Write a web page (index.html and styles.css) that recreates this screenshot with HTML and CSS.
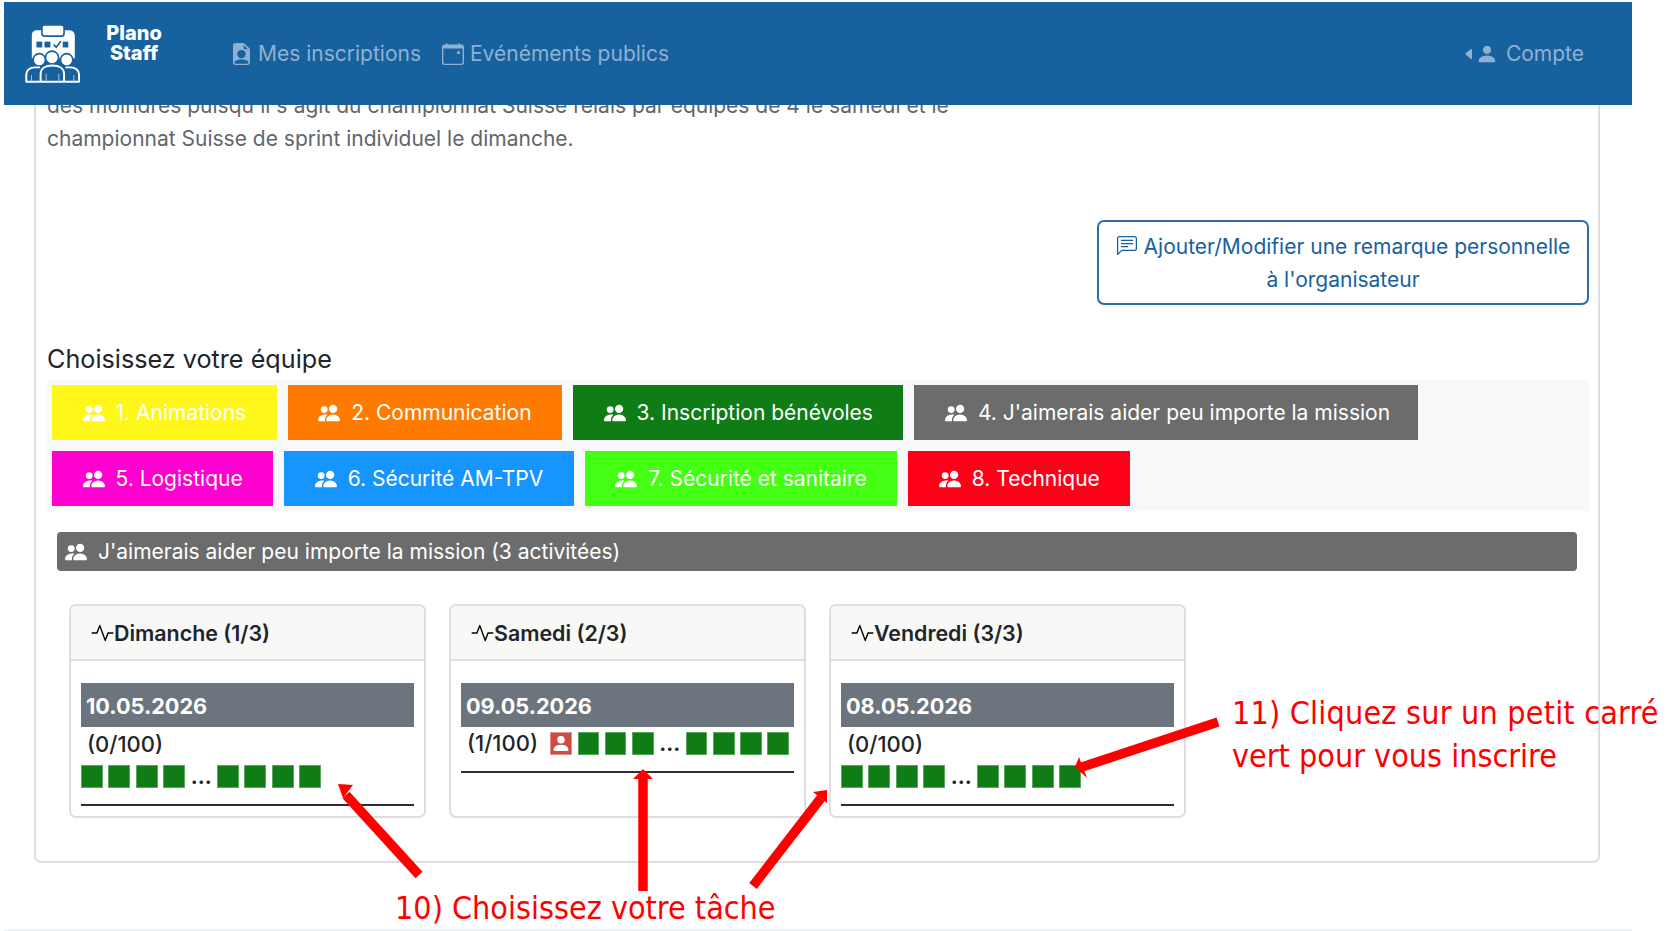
FILE: index.html
```html
<!DOCTYPE html>
<html lang="fr">
<head>
  <meta charset="UTF-8" />
  <title>Plano Staff</title>
  <link rel="stylesheet" href="styles.css">
</head>
<body>

  <!-- Shared icons -->
  <svg class="icon-defs" xmlns="http://www.w3.org/2000/svg">
    <symbol id="i-people" viewBox="0 0 16 16">
      <path d="M7 14s-1 0-1-1 1-4 5-4 5 3 5 4-1 1-1 1H7zm4-6a3 3 0 1 0 0-6 3 3 0 0 0 0 6z"/>
      <path d="M5.216 14A2.238 2.238 0 0 1 5 13c0-1.355.68-2.75 1.936-3.72A6.325 6.325 0 0 0 5 9c-4 0-5 3-5 4s1 1 1 1h4.216z"/>
      <path d="M4.5 8a2.5 2.5 0 1 0 0-5 2.5 2.5 0 0 0 0 5z"/>
    </symbol>
    <symbol id="i-person" viewBox="0 0 16 16">
      <path d="M3 14s-1 0-1-1 1-4 6-4 6 3 6 4-1 1-1 1H3zm5-6a3 3 0 1 0 0-6 3 3 0 0 0 0 6z"/>
    </symbol>
    <symbol id="i-activity" viewBox="0 0 16 16">
      <path d="M6 2a.5.5 0 0 1 .47.33L10 12.036l1.53-4.208A.5.5 0 0 1 12 7.5h3.5a.5.5 0 0 1 0 1h-3.15l-1.88 5.17a.5.5 0 0 1-.94 0L6 3.964 4.47 8.171A.5.5 0 0 1 4 8.5H.5a.5.5 0 0 1 0-1h3.15l1.88-5.17A.5.5 0 0 1 6 2Z"/>
    </symbol>
  </svg>

  <div class="page">

    <!-- Navbar -->
    <nav class="navbar">
      <svg class="logo" viewBox="40 38 175 182" xmlns="http://www.w3.org/2000/svg">
        <path class="logo-board" d="M76 56h104a16 16 0 0 1 16 16v70h-132v-70a16 16 0 0 1 12-16z"/>
        <rect class="logo-clip" x="95" y="40" width="68" height="34" rx="8"/>
        <rect class="logo-box" x="78" y="91" width="18" height="18"/>
        <rect class="logo-box" x="103" y="91" width="18" height="18"/>
        <rect class="logo-box" x="159" y="91" width="17" height="18"/>
        <path class="logo-check" d="M131 100l8 8 14-18"/>
        <circle class="logo-head" cx="87" cy="147" r="19"/>
        <circle class="logo-head" cx="171" cy="147" r="19"/>
        <circle class="logo-head" cx="126" cy="140" r="20"/>
        <path class="logo-body" d="M47 214v-22c0-14 12-22 26-22h16"/>
        <path class="logo-body" d="M209 214v-22c0-14-12-22-26-22h-16"/>
        <path class="logo-body" d="M91 214v-24c0-16 14-26 36-26s36 10 36 26v24"/>
        <path class="logo-body" d="M45 214h166"/>
        <path class="logo-line" d="M63 194v20M108 190v24M147 190v24M193 194v20"/>
      </svg>
      <div class="brand">Plano<br>Staff</div>
      <a class="nav-link" href="#">
        <svg class="nav-icon" viewBox="2 0 12 16" preserveAspectRatio="none"><path d="M9.293 0H4a2 2 0 0 0-2 2v12a2 2 0 0 0 2 2h8a2 2 0 0 0 2-2V4.707A1 1 0 0 0 13.707 4L10 .293A1 1 0 0 0 9.293 0zM9.5 3.5v-2l3 3h-2a1 1 0 0 1-1-1zM11 8a3 3 0 1 1-6 0 3 3 0 0 1 6 0zm2 5.755V14a1 1 0 0 1-1 1H4a1 1 0 0 1-1-1v-.245S4 12 8 12s5 1.755 5 1.755z"/></svg>
        Mes inscriptions
      </a>
      <a class="nav-link" href="#">
        <svg class="nav-icon cal" viewBox="0 0 16 16" preserveAspectRatio="none"><path d="M3.5 0a.5.5 0 0 1 .5.5V1h8V.5a.5.5 0 0 1 1 0V1h1a2 2 0 0 1 2 2v11a2 2 0 0 1-2 2H2a2 2 0 0 1-2-2V3a2 2 0 0 1 2-2h1V.5a.5.5 0 0 1 .5-.5zM1 4v10a1 1 0 0 0 1 1h12a1 1 0 0 0 1-1V4H1z"/><path d="M11 6h2v2h-2z"/></svg>
        Evénéments publics
      </a>
      <a class="nav-link account" href="#">
        <svg class="caret" viewBox="3 2 8 12"><path d="m3.86 8.753 5.482 4.796c.646.566 1.658.106 1.658-.753V3.204a1 1 0 0 0-1.659-.753l-5.48 4.796a1 1 0 0 0 0 1.506z"/></svg>
        <svg class="nav-person"><use href="#i-person"/></svg>
        Compte
      </a>
    </nav>

    <!-- Main card -->
    <div class="main-card">
      <p class="intro">des moindres puisqu'il s'agit du championnat Suisse relais par équipes de 4 le samedi et le championnat Suisse de sprint individuel le dimanche.</p>

      <div class="remark-row">
        <a class="remark-btn" href="#">
          <svg class="remark-icon" viewBox="0 0 16 16"><path d="M14 1a1 1 0 0 1 1 1v8a1 1 0 0 1-1 1H4.414A2 2 0 0 0 3 11.586l-2 2V2a1 1 0 0 1 1-1h12zM2 0a2 2 0 0 0-2 2v12.793a.5.5 0 0 0 .854.353l2.853-2.853A1 1 0 0 1 4.414 12H14a2 2 0 0 0 2-2V2a2 2 0 0 0-2-2H2z"/><path d="M3 3.5a.5.5 0 0 1 .5-.5h9a.5.5 0 0 1 0 1h-9a.5.5 0 0 1-.5-.5zM3 6a.5.5 0 0 1 .5-.5h9a.5.5 0 0 1 0 1h-9A.5.5 0 0 1 3 6zm0 2.5a.5.5 0 0 1 .5-.5h5a.5.5 0 0 1 0 1h-5a.5.5 0 0 1-.5-.5z"/></svg>
          Ajouter/Modifier une remarque personnelle<br>à l'organisateur
        </a>
      </div>

      <h2 class="section-title">Choisissez votre équipe</h2>

      <div class="teams">
        <div class="team-row">
          <a class="team yellow" href="#"><svg class="people"><use href="#i-people"/></svg>1. Animations</a>
          <a class="team orange" href="#"><svg class="people"><use href="#i-people"/></svg>2. Communication</a>
          <a class="team green" href="#"><svg class="people"><use href="#i-people"/></svg>3. Inscription bénévoles</a>
          <a class="team gray" href="#"><svg class="people"><use href="#i-people"/></svg>4. J'aimerais aider peu importe la mission</a>
        </div>
        <div class="team-row">
          <a class="team magenta" href="#"><svg class="people"><use href="#i-people"/></svg>5. Logistique</a>
          <a class="team blue" href="#"><svg class="people"><use href="#i-people"/></svg>6. Sécurité AM-TPV</a>
          <a class="team lime" href="#"><svg class="people"><use href="#i-people"/></svg>7. Sécurité et sanitaire</a>
          <a class="team red" href="#"><svg class="people"><use href="#i-people"/></svg>8. Technique</a>
        </div>
      </div>

      <div class="team-bar"><svg class="people"><use href="#i-people"/></svg>J'aimerais aider peu importe la mission (3 activitées)</div>

      <div class="activities">
        <div class="activity">
          <div class="activity-head"><svg class="pulse"><use href="#i-activity"/></svg>Dimanche (1/3)</div>
          <div class="activity-body">
            <div class="date-bar">10.05.2026</div>
            <div class="count">(0/100)</div>
            <div class="slots">
              <span class="slot"></span><span class="slot"></span><span class="slot"></span><span class="slot"></span>
              <span class="dots">...</span>
              <span class="slot"></span><span class="slot"></span><span class="slot"></span><span class="slot"></span>
            </div>
            <div class="rule"></div>
          </div>
        </div>

        <div class="activity">
          <div class="activity-head"><svg class="pulse"><use href="#i-activity"/></svg>Samedi (2/3)</div>
          <div class="activity-body">
            <div class="date-bar">09.05.2026</div>
            <div class="slots inline">
              <span class="count">(1/100)</span>
              <span class="slot taken"><svg><use href="#i-person"/></svg></span>
              <span class="slot"></span><span class="slot"></span><span class="slot"></span>
              <span class="dots">...</span>
              <span class="slot"></span><span class="slot"></span><span class="slot"></span><span class="slot"></span>
            </div>
            <div class="rule"></div>
          </div>
        </div>

        <div class="activity">
          <div class="activity-head"><svg class="pulse"><use href="#i-activity"/></svg>Vendredi (3/3)</div>
          <div class="activity-body">
            <div class="date-bar">08.05.2026</div>
            <div class="count">(0/100)</div>
            <div class="slots">
              <span class="slot"></span><span class="slot"></span><span class="slot"></span><span class="slot"></span>
              <span class="dots">...</span>
              <span class="slot"></span><span class="slot"></span><span class="slot"></span><span class="slot"></span>
            </div>
            <div class="rule"></div>
          </div>
        </div>
      </div>
    </div>

    <div class="bottom-strip"></div>
  </div>

  <!-- Red annotations over the screenshot -->
  <svg class="arrows" viewBox="0 0 1667 931" xmlns="http://www.w3.org/2000/svg">
    <path d="M419 875L346 795"/>
    <path d="M643 891V776"/>
    <path d="M753 886L821 798"/>
    <path d="M1218 722L1082 767"/>
    <polygon points="338,784 353,785 343,798"/>
    <polygon points="643,769 653,779 633,779"/>
    <polygon points="827,790 813,792 827,803"/>
    <polygon points="1075,767 1079,757 1087,778"/>
  </svg>
  <div class="note note-task">10) Choisissez votre tâche</div>
  <div class="note note-slot"><span class="note-first">11) Cliquez sur un petit carré</span><br>vert pour vous inscrire</div>

</body>
</html>
```

FILE: styles.css
```css
html, body {
  margin: 0;
  padding: 0;
  height: 100%;
  overflow: hidden;
  background-color: #fff;
  font-family: Inter, "Liberation Sans", sans-serif;
  font-size: 21px;
  color: #212529;
}

a {
  text-decoration: none;
}

.icon-defs {
  display: none;
}

.page {
  position: relative;
  width: 1628px;
  height: 931px;
  margin-left: 4px;
}

/* Navbar */
.navbar {
  position: absolute;
  top: 2px;
  left: 0;
  right: 0;
  height: 103px;
  display: flex;
  align-items: center;
  background-color: #18619f;
  z-index: 10;
}
.logo {
  width: 57px;
  height: 60px;
  margin-left: 20px;
  flex: none;
}
.logo-board {
  fill: #fff;
}
.logo-clip {
  fill: #fff;
  stroke: #18619f;
  stroke-width: 5;
}
.logo-box {
  fill: #18619f;
}
.logo-check {
  fill: none;
  stroke: #18619f;
  stroke-width: 5;
}
.logo-head {
  fill: #fff;
  stroke: #18619f;
  stroke-width: 5;
}
.logo-body {
  fill: none;
  stroke: #fff;
  stroke-width: 6;
}
.logo-line {
  fill: none;
  stroke: #a9c4dc;
  stroke-width: 3;
}
.brand {
  width: 70px;
  margin: -21px 0 0 18px;
  text-align: center;
  color: #fff;
  font-weight: 800;
  font-size: 20px;
  line-height: 20px;
}
.nav-link {
  display: flex;
  align-items: center;
  color: #8fb1d1;
  white-space: nowrap;
}
.nav-link svg {
  fill: #8fb1d1;
}
.nav-link:nth-of-type(1) {
  margin-left: 64px;
}
.nav-link:nth-of-type(2) {
  margin-left: 21px;
}
.nav-icon {
  width: 17px;
  height: 22px;
  margin-right: 8px;
}
.nav-icon.cal {
  width: 22px;
  margin-right: 6px;
}
.account {
  margin-left: auto;
  margin-right: 48px;
}
.caret {
  width: 7px;
  height: 12px;
  margin-right: 4px;
}
.nav-person {
  width: 22px;
  height: 22px;
  margin-right: 8px;
}

/* Main card */
.main-card {
  box-sizing: border-box;
  width: 1566px;
  height: 804px;
  margin-left: 30px;
  position: absolute;
  top: 59px;
  padding: 28px 9px 0 11px;
  border: 2px solid #dedede;
  border-radius: 7px;
}
.intro {
  width: 950px;
  margin: 0;
  color: #5f666d;
  line-height: 33px;
}
.remark-row {
  display: flex;
  justify-content: flex-end;
  margin-top: 65px;
}
.remark-btn {
  box-sizing: border-box;
  width: 492px;
  height: 85px;
  padding: 8px 0;
  border: 2px solid #2a6ea8;
  border-radius: 7px;
  color: #18619f;
  text-align: center;
  line-height: 33px;
}
.remark-icon {
  width: 22px;
  height: 20px;
  fill: #18619f;
  vertical-align: -2px;
}
.section-title {
  margin: 38px 0 5px;
  font-size: 25.2px;
  font-weight: 400;
  line-height: 32px;
}

/* Team buttons */
.teams {
  padding: 5px 6px 5px 5px;
  background-color: #f8f9fa;
}
.team-row {
  display: flex;
  gap: 11px;
}
.team-row + .team-row {
  margin-top: 11px;
}
.team {
  display: flex;
  align-items: center;
  height: 55px;
  padding: 0 30.5px;
  color: #fff;
  white-space: nowrap;
}
.team.gray {
  padding-right: 28px;
}
.people {
  width: 22px;
  height: 22px;
  margin-right: 11px;
  fill: #fff;
}
.yellow { background-color: #fff71a; }
.orange { background-color: #ff7b00; }
.green { background-color: #0f7c15; }
.gray { background-color: #6c6c6c; }
.magenta { background-color: #ff00d0; }
.blue { background-color: #1795ff; }
.lime { background-color: #44ff14; }
.red { background-color: #ff0018; }

.team-bar {
  display: flex;
  align-items: center;
  height: 39px;
  margin: 21px 12px 0 10px;
  padding-left: 8px;
  border-radius: 4px;
  background-color: #6c6c6c;
  color: #fff;
}

/* Activity cards */
.activities {
  display: flex;
  gap: 23px;
  margin: 33px 0 0 22px;
}
.activity {
  box-sizing: border-box;
  width: 357px;
  height: 214px;
  border: 2px solid #dedede;
  border-radius: 7px;
  overflow: hidden;
}
.activity-head {
  display: flex;
  align-items: center;
  height: 53px;
  padding-left: 20px;
  background-color: #f8f8f7;
  border-bottom: 2px solid #dedede;
  font-size: 21.4px;
  font-weight: 600;
}
.pulse {
  width: 23px;
  height: 22px;
}
.activity-body {
  padding: 22px 10px 0;
}
.date-bar {
  height: 44px;
  padding-left: 5px;
  background-color: #6c757d;
  color: #fff;
  font-size: 21.7px;
  font-weight: 700;
  line-height: 46px;
}
.count {
  margin-left: 6px;
  font-size: 22px;
  font-weight: 500;
  line-height: 35px;
}
.slots {
  display: flex;
  align-items: center;
  height: 23px;
  margin-top: 3px;
}
.slots.inline {
  margin-top: 5px;
}
.slots.inline .count {
  width: 84px;
}
.slot {
  box-sizing: border-box;
  width: 22px;
  height: 23px;
  margin-right: 5.3px;
  background-color: #0f7c15;
  border: 1px solid #5aa75e;
}
.slot.taken {
  background-color: #cd4a45;
  border-color: #e08f8b;
}
.slot.taken svg {
  display: block;
  width: 20px;
  height: 21px;
  fill: #fff;
}
.dots {
  width: 26px;
  margin: 0 3px 0 -2px;
  font-weight: 700;
  text-align: center;
}
.rule {
  height: 2px;
  margin-top: 16px;
  background-color: #2b2f33;
}

.bottom-strip {
  position: absolute;
  left: 0;
  right: 0;
  bottom: 0;
  height: 2px;
  background-color: #eef3f8;
}

/* Annotations */
.arrows {
  position: absolute;
  top: 0;
  left: 0;
  width: 1667px;
  height: 931px;
  z-index: 20;
}
.arrows path {
  fill: none;
  stroke: #fe0000;
  stroke-width: 9.5;
}
.arrows polygon {
  fill: #fe0000;
}
.note {
  position: absolute;
  z-index: 21;
  color: #fe0000;
  font-family: "DejaVu Sans", sans-serif;
  font-stretch: condensed;
  font-size: 32px;
  line-height: 43px;
  white-space: nowrap;
}
.note-task {
  left: 395px;
  top: 887px;
}
.note-slot {
  left: 1232px;
  top: 692px;
}
.note-first {
  letter-spacing: 0.2px;
}
```
